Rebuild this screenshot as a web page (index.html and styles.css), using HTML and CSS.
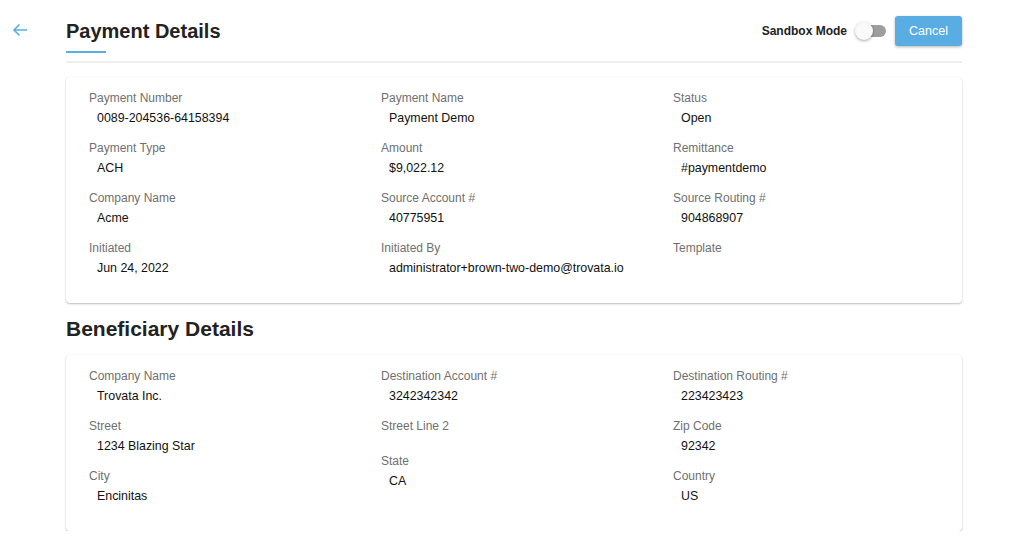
FILE: index.html
```html
<!DOCTYPE html>
<html>
<head>
<meta charset="utf-8">
<link rel="stylesheet" href="styles.css">
</head>
<body>
<div class="page">
  <div class="back">
    <svg width="16" height="14" viewBox="0 0 16 14"><path d="M15 7H2M7.5 1.5L2 7l5.5 5.5" fill="none" stroke="#5aaee2" stroke-width="1.6"/></svg>
  </div>
  <main class="content">
    <header class="header">
      <div class="title-wrap">
        <h1 class="title">Payment Details</h1>
        <div class="title-bar"></div>
      </div>
      <div class="actions">
        <span class="sandbox">Sandbox Mode</span>
        <span class="toggle"><span class="track"></span><span class="knob"></span></span>
        <button class="cancel">Cancel</button>
      </div>
    </header>
    <div class="divider"></div>

    <section class="card">
      <div class="col">
        <div class="field"><div class="label">Payment Number</div><div class="value">0089-204536-64158394</div></div>
        <div class="field"><div class="label">Payment Type</div><div class="value">ACH</div></div>
        <div class="field"><div class="label">Company Name</div><div class="value">Acme</div></div>
        <div class="field"><div class="label">Initiated</div><div class="value">Jun 24, 2022</div></div>
      </div>
      <div class="col">
        <div class="field"><div class="label">Payment Name</div><div class="value">Payment Demo</div></div>
        <div class="field"><div class="label">Amount</div><div class="value">$9,022.12</div></div>
        <div class="field"><div class="label">Source Account #</div><div class="value">40775951</div></div>
        <div class="field"><div class="label">Initiated By</div><div class="value">administrator+brown-two-demo@trovata.io</div></div>
      </div>
      <div class="col">
        <div class="field"><div class="label">Status</div><div class="value">Open</div></div>
        <div class="field"><div class="label">Remittance</div><div class="value">#paymentdemo</div></div>
        <div class="field"><div class="label">Source Routing #</div><div class="value">904868907</div></div>
        <div class="field"><div class="label">Template</div><div class="value"></div></div>
      </div>
    </section>

    <h2 class="subtitle">Beneficiary Details</h2>

    <section class="card">
      <div class="col">
        <div class="field"><div class="label">Company Name</div><div class="value">Trovata Inc.</div></div>
        <div class="field"><div class="label">Street</div><div class="value">1234 Blazing Star</div></div>
        <div class="field"><div class="label">City</div><div class="value">Encinitas</div></div>
      </div>
      <div class="col">
        <div class="field"><div class="label">Destination Account #</div><div class="value">3242342342</div></div>
        <div class="field"><div class="label">Street Line 2</div><div class="value"></div></div>
        <div class="field"><div class="label">State</div><div class="value">CA</div></div>
      </div>
      <div class="col">
        <div class="field"><div class="label">Destination Routing #</div><div class="value">223423423</div></div>
        <div class="field"><div class="label">Zip Code</div><div class="value">92342</div></div>
        <div class="field"><div class="label">Country</div><div class="value">US</div></div>
      </div>
    </section>
  </main>
</div>
</body>
</html>
```

FILE: styles.css
```css
* { box-sizing: border-box; }
html, body { margin: 0; padding: 0; background: #fff; }
body {
  font-family: "Liberation Sans", Arial, Helvetica, sans-serif;
  color: #212121;
}
.page {
  display: flex;
  align-items: flex-start;
}
.back {
  width: 66px;
  padding: 23px 0 0 12px;
  height: 40px;
}
.back svg { display: block; }
.content {
  width: 896px;
}
.header {
  display: flex;
  justify-content: space-between;
  align-items: flex-start;
  padding-top: 16px;
}
.title-wrap { padding-top: 3px; }
.title {
  margin: 0;
  font-size: 20px;
  line-height: 24px;
  font-weight: 600;
  color: #222;
}
.title-bar {
  width: 40px;
  height: 2px;
  background: #5aaee2;
  margin-top: 8px;
}
.actions {
  display: flex;
  align-items: center;
  height: 30px;
}
.sandbox {
  font-size: 12px;
  font-weight: bold;
  color: #222;
  margin-right: 8px;
}
.toggle {
  position: relative;
  width: 32px;
  height: 18px;
  margin-right: 8px;
  display: inline-block;
}
.track {
  position: absolute;
  left: 2px;
  right: 1px;
  top: 3px;
  height: 12px;
  border-radius: 6px;
  background: #9e9e9e;
}
.knob {
  position: absolute;
  left: 0;
  top: 0;
  width: 18px;
  height: 18px;
  border-radius: 50%;
  background: #fafafa;
  box-shadow: 0 1px 3px rgba(0,0,0,0.35);
}
.cancel {
  width: 67px;
  height: 30px;
  border: 0;
  border-radius: 3px;
  background: #5aade2;
  color: #fff;
  font-family: inherit;
  font-size: 12.5px;
  box-shadow: 0 1px 3px rgba(0,0,0,0.3);
  padding: 0;
}
.divider {
  height: 2px;
  background: #eeeeee;
  margin-top: 8px;
}
.card {
  margin-top: 14px;
  background: #fff;
  border-radius: 4px;
  box-shadow: 0 1px 2px rgba(0,0,0,0.25), 0 0 1px rgba(0,0,0,0.08);
  padding: 13px 23px 13px;
  display: grid;
  grid-template-columns: 292px 292px 1fr;
}
.field {
  margin-bottom: 14px;
}
.label {
  font-size: 12px;
  line-height: 16px;
  color: #707070;
}
.value {
  font-size: 12.4px;
  line-height: 15px;
  padding-top: 5px;
  padding-left: 8px;
  color: #111;
  min-height: 5px;
}
.subtitle {
  margin: 0;
  font-size: 21px;
  line-height: 24px;
  font-weight: bold;
  color: #222;
  padding-top: 14px;
}
.subtitle + .card { margin-top: 14px; }
```
